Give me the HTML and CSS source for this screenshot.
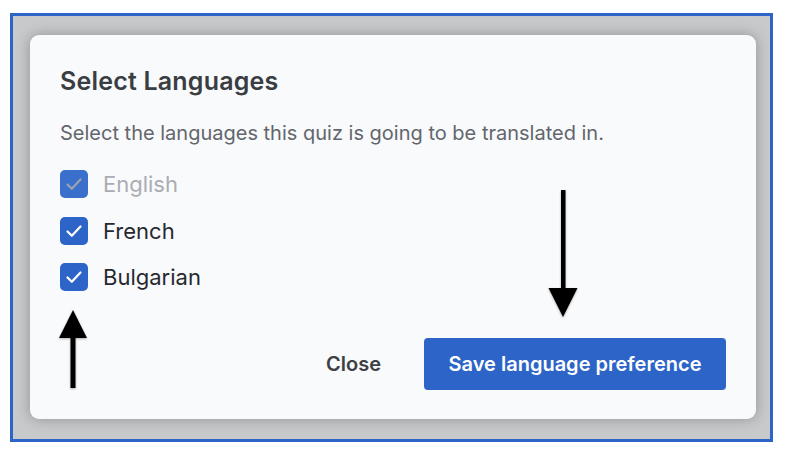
FILE: index.html
```html
<!DOCTYPE html>
<html lang="en">
<head>
  <meta charset="UTF-8">
  <title>Select Languages</title>
  <link rel="stylesheet" href="styles.css">
</head>
<body>

  <div class="frame">
    <div class="dialog">
      <h2>Select Languages</h2>
      <p class="hint">Select the languages this quiz is going to be translated in.</p>

      <ul class="langs">
        <li class="lang disabled">
          <span class="box">
            <svg viewBox="0 0 28 28"><path d="M7.5 14.5 L11.8 18.8 L20.5 9.5"/></svg>
          </span>
          English
        </li>
        <li class="lang">
          <span class="box">
            <svg viewBox="0 0 28 28"><path d="M7.5 14.5 L11.8 18.8 L20.5 9.5"/></svg>
          </span>
          French
        </li>
        <li class="lang">
          <span class="box">
            <svg viewBox="0 0 28 28"><path d="M7.5 14.5 L11.8 18.8 L20.5 9.5"/></svg>
          </span>
          Bulgarian
        </li>
      </ul>

      <div class="actions">
        <button class="btn-close">Close</button>
        <button class="btn-save">Save language preference</button>
      </div>

      <!-- annotation arrows -->
      <svg class="arrow arrow-down" viewBox="0 0 30 128">
        <rect x="13" y="0" width="4.5" height="102"/>
        <polygon points="0.5,98 29.5,98 15,127"/>
      </svg>
      <svg class="arrow arrow-up" viewBox="0 0 30 80">
        <polygon points="1,29 29,29 15,1"/>
        <rect x="12.5" y="27" width="5" height="52"/>
      </svg>
    </div>
  </div>

</body>
</html>
```

FILE: styles.css
```css
:root {
  --blue: #2c64c7;
  --frame-gray: #c8c9cb;
  --card-bg: #f9fafc;
  --title: #3a3d42;
  --muted: #62666c;
  --text: #26292e;
  --font-sans: Inter, "Noto Sans", sans-serif;
}
*, *::before, *::after {
  box-sizing: border-box;
  margin: 0;
  padding: 0;
}
body {
  font-family: var(--font-sans);
  background: #ffffff;
}
.frame {
  width: 763px;
  height: 429px;
  margin: 13px 0 0 10px;
  border: 3px solid var(--blue);
  background: var(--frame-gray);
  padding: 19px 14px 20px 17px;
}
.dialog {
  position: relative;
  height: 100%;
  background: var(--card-bg);
  border-radius: 9px;
  box-shadow: 0 0 14px rgba(0,0,0,0.28);
  padding: 31px 30px 30px 30px;
}
h2 {
  font-size: 25px;
  line-height: 30px;
  font-weight: 600;
  color: var(--title);
  letter-spacing: 0.2px;
}
.hint {
  margin-top: 25px;
  font-size: 20px;
  line-height: 24px;
  color: var(--muted);
}
.langs {
  list-style: none;
  margin-top: 16px;
}
.lang {
  display: flex;
  align-items: center;
  gap: 15px;
  height: 46.5px;
  font-size: 22px;
  color: var(--text);
}
.box {
  width: 28px;
  height: 28px;
  border-radius: 5px;
  background: var(--blue);
  display: flex;
}
.box svg {
  width: 28px;
  height: 28px;
  fill: none;
  stroke: #ffffff;
  stroke-width: 2.2;
  stroke-linecap: round;
  stroke-linejoin: round;
}
.lang.disabled {
  color: #a9adb3;
}
.lang.disabled .box {
  background: #3a6fcb;
}
.lang.disabled .box svg {
  stroke: #9ba3ae;
}
.actions {
  display: flex;
  justify-content: flex-end;
  align-items: center;
  gap: 43px;
  margin-top: 37px;
}
button {
  font-family: var(--font-sans);
  border: none;
  background: none;
  cursor: pointer;
}
.btn-close {
  font-size: 20px;
  font-weight: 600;
  color: #3c3f44;
}
.btn-save {
  width: 302px;
  height: 52px;
  border-radius: 4px;
  background: var(--blue);
  color: #ffffff;
  font-size: 20px;
  font-weight: 600;
}
.arrow {
  position: absolute;
  fill: #000000;
  filter: drop-shadow(0 1px 1px rgba(0,0,0,0.3));
}
.arrow-down {
  left: 518px;
  top: 155px;
  width: 30px;
  height: 128px;
}
.arrow-up {
  left: 28px;
  top: 274px;
  width: 30px;
  height: 80px;
}
```
